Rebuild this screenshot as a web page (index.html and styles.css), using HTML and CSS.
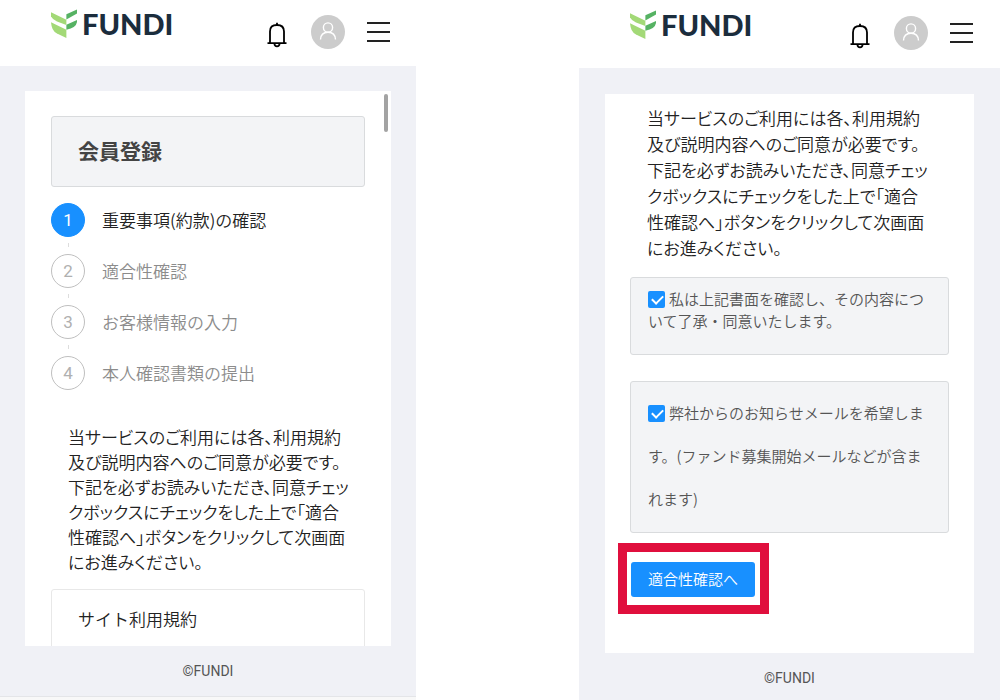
FILE: index.html
```html
<!DOCTYPE html>
<html lang="ja">
<head>
    <meta charset="UTF-8">
    <meta name="viewport" content="width=device-width, initial-scale=1.0">
    <title>FUNDI 会員登録</title>
    <link rel="stylesheet" href="styles.css">
</head>
<body>
    <!-- shared shapes for both headers -->
    <svg class="sprite" aria-hidden="true">
        <symbol id="leaf" viewBox="0 0 26 29">
            <path fill="#a3d977" d="M0 3.3L15.4 10.7V16L6 12.4Q1.5 10.6 0 7.6Z"/>
            <path fill="#a3d977" d="M0 13.3L15.4 20.7V29L6 24.6Q0.6 22 0 13.3Z"/>
            <path fill="#56b263" d="M15.4 5.3L26 0.5V4.6L15.4 10.4Z"/>
            <path fill="#56b263" d="M15.4 15.8L26 11V13Q25 19 15.4 20.7Z"/>
        </symbol>
        <symbol id="bell" viewBox="0 0 20 26">
            <g fill="none" stroke="#000" stroke-width="1.8">
                <path d="M3 21V9.5Q3 3 10 3Q17 3 17 9.5V21"/>
                <path d="M0.5 21.2H19.5M10 0.8V3"/>
                <path d="M7.4 21.5Q7.6 24.4 10 24.4Q12.4 24.4 12.6 21.5"/>
            </g>
        </symbol>
        <symbol id="user" viewBox="0 0 34 34">
            <circle cx="17" cy="17" r="17" fill="#ccc"/>
            <g fill="none" stroke="#fff" stroke-width="1.4">
                <circle cx="17" cy="12.5" r="4.6"/>
                <path d="M9.5 24.5Q9.8 17.2 17 17.2Q24.2 17.2 24.5 24.5"/>
            </g>
        </symbol>
        <symbol id="bars" viewBox="0 0 23 21">
            <path stroke="#222" stroke-width="2" d="M0 2H23M0 11H23M0 20H23"/>
        </symbol>
    </svg>

    <div class="screens">
        <section class="phone">
            <header>
                <a class="logo" href="#"><svg><use href="#leaf"/></svg>FUNDI</a>
                <button class="icon bell" type="button" aria-label="お知らせ"><svg><use href="#bell"/></svg></button>
                <button class="icon user" type="button" aria-label="マイページ"><svg><use href="#user"/></svg></button>
                <button class="icon bars" type="button" aria-label="メニュー"><svg><use href="#bars"/></svg></button>
            </header>
            <main class="panel">
                <div class="scroll-thumb"></div>
                <h1>会員登録</h1>
                <ol class="steps">
                    <li class="active"><div class="step"><span class="num">1</span>重要事項(約款)の確認</div></li>
                    <li><div class="step"><span class="num">2</span>適合性確認</div></li>
                    <li><div class="step"><span class="num">3</span>お客様情報の入力</div></li>
                    <li><div class="step"><span class="num">4</span>本人確認書類の提出</div></li>
                </ol>
                <p class="lead">当サービスのご利用には各、利用規約<br>及び説明内容へのご同意が必要です。<br>下記を必ずお読みいただき、同意チェッ<br>クボックスにチェックをした上で「適合<br>性確認へ」ボタンをクリックして次画面<br>にお進みください。</p>
                <div class="terms">サイト利用規約</div>
            </main>
            <footer>©FUNDI</footer>
            <div class="browser-bar"></div>
        </section>

        <section class="phone phone-agree">
            <header>
                <a class="logo" href="#"><svg><use href="#leaf"/></svg>FUNDI</a>
                <button class="icon bell" type="button" aria-label="お知らせ"><svg><use href="#bell"/></svg></button>
                <button class="icon user" type="button" aria-label="マイページ"><svg><use href="#user"/></svg></button>
                <button class="icon bars" type="button" aria-label="メニュー"><svg><use href="#bars"/></svg></button>
            </header>
            <form class="panel">
                <p class="lead">当サービスのご利用には各、利用規約<br>及び説明内容へのご同意が必要です。<br>下記を必ずお読みいただき、同意チェッ<br>クボックスにチェックをした上で「適合<br>性確認へ」ボタンをクリックして次画面<br>にお進みください。</p>
                <div class="check-box">
                    <input type="checkbox" id="agree" checked><label for="agree">私は上記書面を確認し、その内容につ<br>いて了承・同意いたします。</label>
                </div>
                <div class="check-box mail">
                    <input type="checkbox" id="mail" checked><label for="mail">弊社からのお知らせメールを希望しま<br>す。(ファンド募集開始メールなどが含ま<br>れます)</label>
                </div>
                <div class="highlight">
                    <button class="next" type="button">適合性確認へ</button>
                </div>
            </form>
            <footer>©FUNDI</footer>
        </section>
    </div>
</body>
</html>
```
FILE: styles.css
```css
* {
    box-sizing: border-box;
}
body {
    margin: 0;
    background: #fff;
    color: #222;
    font-family: "Noto Sans CJK JP", sans-serif;
    font-weight: 350;
    font-size: 17px;
}
.sprite {
    display: none;
}
.screens {
    display: flex;
    gap: 163px;
    height: 100vh;
    overflow: hidden;
}
.phone {
    flex: 416 1 0;
    min-width: 0;
    display: flex;
    flex-direction: column;
    background: #f0f1f6;
}
.phone-agree {
    flex-grow: 421;
}

/* header */
header {
    display: flex;
    align-items: flex-start;
    height: 66px;
    padding: 9px 26px 0 51px;
    background: #fff;
}
.phone-agree header {
    height: 68px;
    padding: 10px 27px 0 51px;
}
.logo {
    display: flex;
    align-items: center;
    gap: 5px;
    height: 29px;
    margin-right: auto;
    color: #1b2d3d;
    font-family: Lato, sans-serif;
    font-size: 29px;
    font-weight: 900;
    text-decoration: none;
}
.logo svg {
    width: 26px;
    height: 29px;
}
.icon {
    padding: 0;
    border: none;
    background: none;
    cursor: pointer;
}
.icon svg {
    display: block;
    width: 100%;
    height: 100%;
}
.bell {
    width: 20px;
    height: 26px;
    margin: 13px 24px 0 0;
}
.user {
    width: 34px;
    height: 34px;
    margin: 6px 22px 0 0;
}
.bars {
    width: 23px;
    height: 21px;
    margin-top: 12px;
}

/* white panel */
.panel {
    position: relative;
    flex: 1;
    min-height: 0;
    margin: 25px 25px 0;
    padding: 25px 26px 0;
    background: #fff;
    overflow: hidden;
}
.phone-agree .panel {
    margin: 26px 26px 0;
    padding: 11px 25px 0;
}
.scroll-thumb {
    position: absolute;
    top: 3px;
    right: 3px;
    width: 4px;
    height: 38px;
    border-radius: 2px;
    background: #a3a3a3;
}
h1 {
    margin: 0 0 16px;
    padding: 0 26px 2px;
    border: 1px solid #d9dbdd;
    border-radius: 3px;
    background: #f3f4f6;
    color: #444;
    font-size: 21px;
    font-weight: 700;
    line-height: 67px;
}

/* steps */
.steps {
    margin: 0;
    padding: 0;
    list-style: none;
    color: #8c8c8c;
}
.steps li + li::before {
    content: "";
    display: block;
    width: 1px;
    height: 4px;
    margin: 6px 0 7px 17px;
    background: #ddd;
}
.step {
    display: flex;
    align-items: center;
    gap: 17px;
    height: 34px;
    line-height: 32px;
}
.num {
    width: 34px;
    height: 34px;
    border: 1px solid #bfbfbf;
    border-radius: 50%;
    color: #b0b0b0;
    font-family: Roboto, sans-serif;
    font-weight: 400;
    line-height: 33px;
    text-align: center;
}
.active {
    color: #222;
}
.active .num {
    border-color: #1890ff;
    background: #1890ff;
    color: #fff;
}

.lead {
    margin: 34px 0 15px;
    padding: 0 17px;
    font-feature-settings: "palt";
    line-height: 25px;
    white-space: nowrap;
}
.phone-agree .lead {
    margin: 0 0 16px;
    line-height: 26px;
}
.terms {
    height: 200px;
    padding: 0 26px;
    border: 1px solid #e8e8e8;
    border-radius: 3px;
    line-height: 58px;
}

/* agreement */
.check-box {
    margin-bottom: 26px;
    padding: 10px 17px 22px;
    border: 1px solid #d9dbdd;
    border-radius: 3px;
    background: #f3f4f6;
    color: #555;
    font-size: 15px;
    line-height: 22px;
    white-space: nowrap;
}
.mail {
    margin-bottom: 10px;
    padding: 9px 17px 12px;
    line-height: 43px;
}
.check-box input {
    appearance: none;
    position: relative;
    width: 17px;
    height: 17px;
    margin: 0 4px 0 0;
    border-radius: 2px;
    background: #1890ff;
    vertical-align: -3px;
}
.check-box input:checked::after {
    content: "";
    position: absolute;
    top: 4px;
    left: 4px;
    width: 9px;
    height: 5px;
    border: solid #fff;
    border-width: 0 0 2px 2px;
    transform: rotate(-45deg);
}
.highlight {
    width: fit-content;
    margin-left: -12px;
    padding: 10px 5px 8px 4px;
    border: 9px solid #e00f3d;
}
.next {
    display: block;
    height: 35px;
    padding: 0 17px 2px;
    border: none;
    border-radius: 3px;
    background: #1890ff;
    color: #fff;
    font-family: inherit;
    font-size: 15px;
    font-weight: 350;
    cursor: pointer;
}

footer {
    padding: 15px 0;
    color: #555;
    font-family: Roboto, sans-serif;
    font-size: 14px;
    font-weight: 400;
    line-height: 20px;
    text-align: center;
}
.phone-agree footer {
    padding-bottom: 12px;
}
.browser-bar {
    height: 4px;
    border-top: 1px solid #e4e5e8;
    background: #f8f8f8;
}
```
